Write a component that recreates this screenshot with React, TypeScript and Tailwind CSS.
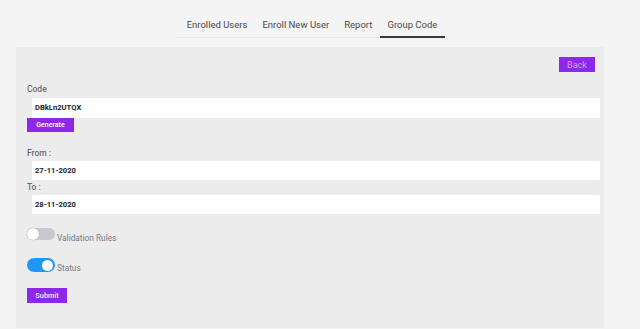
import { useState } from 'react'

type ToggleProps = {
    on: boolean,
    label: string,
    onChange: () => void
}

function Toggle({ on, label, onChange }: ToggleProps) {
    return (
        <label className="flex items-start cursor-pointer" onClick={onChange}>
            <span className={`flex items-center rounded-full w-[28px] ${on ? 'h-[14px] bg-[#2196f3] justify-end pr-[2px]' : 'h-[12px] bg-[#c9c8ce] justify-start'}`}>
                <span className={`rounded-full bg-white ${on ? 'w-[11px] h-[11px]' : 'w-[12px] h-[12px] shadow-[0_0_1px_rgba(0,0,0,0.4)]'}`} />
            </span>
            <span className="ml-[2px] mt-[4px] leading-[12px] text-[8.3px] text-[#7a7a7e]">
                {label}
            </span>
        </label>
    )
}

function Field({ value, h }: { value: string, h: string }) {
    return (
        <div className={`ml-[5px] ${h} bg-white rounded-[1px] flex items-center pl-[3px] text-[7.6px] font-bold text-[#222]`}>
            {value}
        </div>
    )
}

export default function App() {
    const [tab, setTab] = useState('Group Code')
    const [rules, setRules] = useState(false)
    const [status, setStatus] = useState(true)
    const tabs = ['Enrolled Users', 'Enroll New User', 'Report', 'Group Code']

    return (
        <div className="w-full h-[329px] overflow-hidden bg-[#f4f4f4] font-['Roboto',sans-serif]">
            <div className="flex justify-center pt-[14px] pr-[18px]">
                <nav className="flex border-b border-[#e8e8e8] pl-[2px]">
                    {tabs.map(t => (
                        <button
                            key={t}
                            onClick={() => setTab(t)}
                            className={`px-[7.5px] h-[24px] text-[9.5px] text-[#4a4a4a] border-b-2 -mb-px ${tab === t ? 'border-[#3a3a3a]' : 'border-transparent'}`}
                        >
                            {t}
                        </button>
                    ))}
                </nav>
            </div>

            <div className="ml-[16px] mt-[9px] w-[588px] bg-[#ececec] pl-[11px] pr-[4px] pt-[10px] pb-[25px]">
                <div className="flex justify-end pr-[5px]">
                    <button className="block w-[36px] h-[15px] bg-[#8d28e9] text-[9px] text-[#c4a6ee] leading-none pt-[2px]">
                        Back
                    </button>
                </div>

                <div className="mt-[11px] leading-[12px] text-[8.5px] font-medium text-[#6d6d70]">Code</div>
                <div className="mt-[3px]">
                    <Field value="DBkLn2UTQX" h="h-[20px]" />
                </div>
                <button className="block w-[47px] h-[14px] bg-[#8d28e9] text-[7px] font-medium text-white leading-none">
                    Generate
                </button>

                <div className="mt-[15px] leading-[12px] text-[8.5px] font-medium text-[#6d6d70]">From :</div>
                <div className="mt-[2px]">
                    <Field value="27-11-2020" h="h-[19px]" />
                </div>
                <div className="mt-[1px] leading-[12px] text-[8.5px] font-medium text-[#6d6d70]">To :</div>
                <div className="mt-[2px]">
                    <Field value="28-11-2020" h="h-[19px]" />
                </div>

                <div className="mt-[14px]">
                    <Toggle on={rules} label="Validation Rules" onChange={() => setRules(!rules)} />
                </div>
                <div className="mt-[14px]">
                    <Toggle on={status} label="Status" onChange={() => setStatus(!status)} />
                </div>

                <button className="block mt-[14px] w-[40px] h-[15px] bg-[#8d28e9] text-[7.3px] font-bold text-[#e6d8f8] leading-none">
                    Submit
                </button>
            </div>

            <div className="ml-[16px] mt-[1px] text-[10px] text-[#333]">Edit</div>
        </div>
    )
}
